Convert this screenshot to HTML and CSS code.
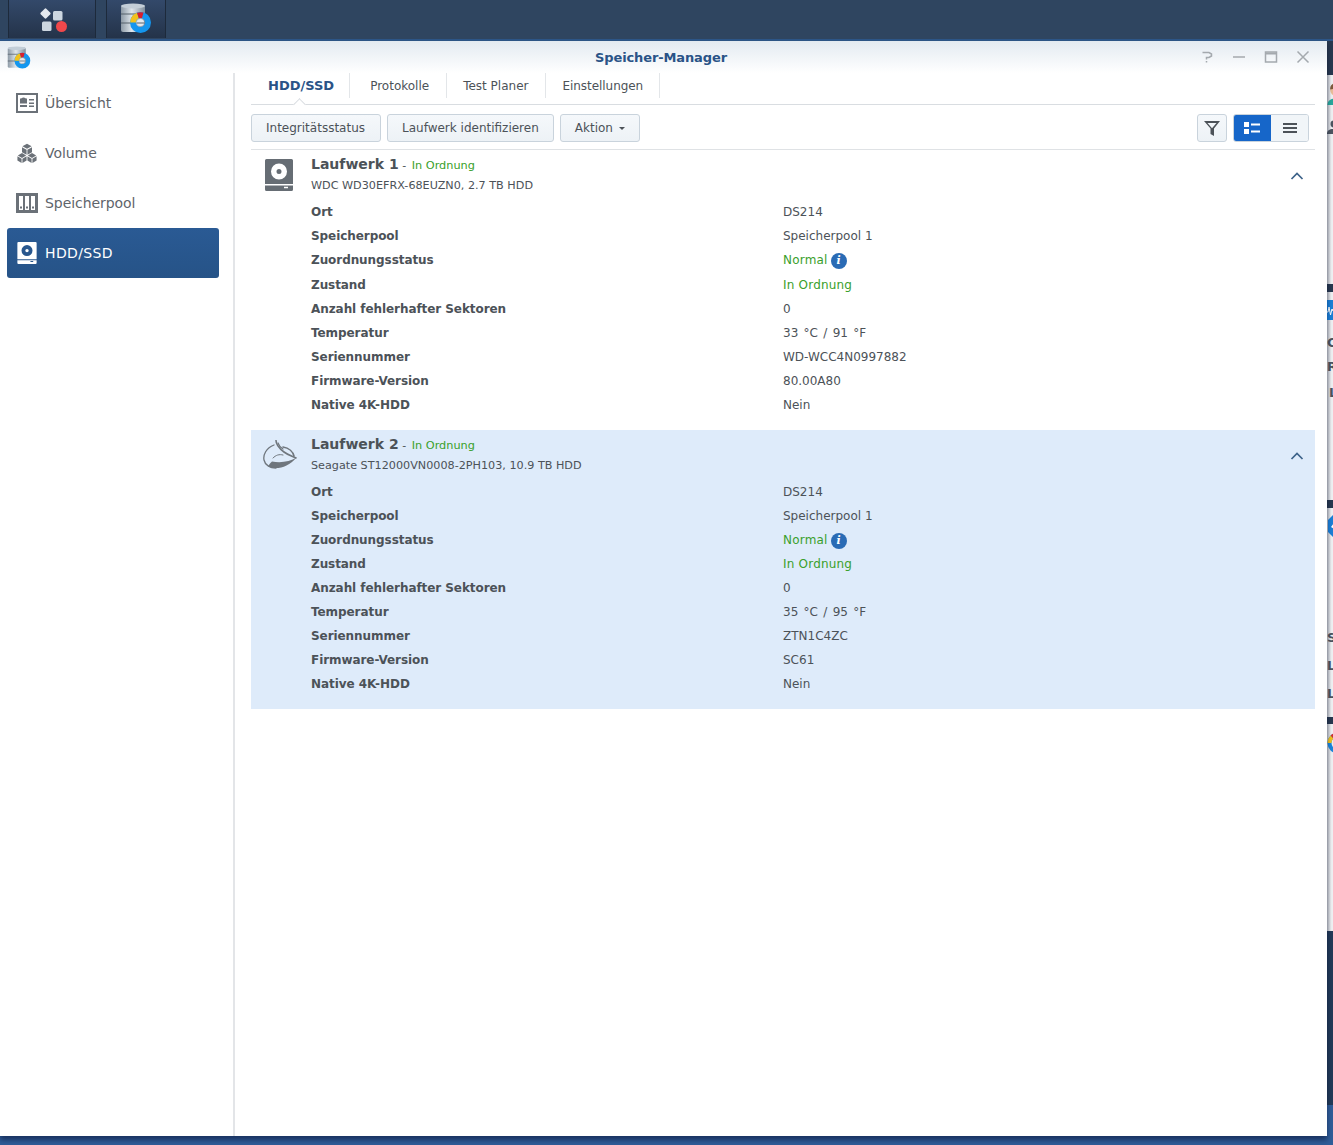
FILE: index.html
```html
<!DOCTYPE html>
<html lang="de">
<head>
<meta charset="utf-8">
<title>Speicher-Manager</title>
<link rel="stylesheet" href="styles.css">
</head>
<body>
<svg class="defs" width="0" height="0" aria-hidden="true">
  <defs>
    <linearGradient id="cyl" x1="0" x2="1" y1="0" y2="0">
      <stop offset="0" stop-color="#8d9aa6"/><stop offset=".45" stop-color="#dfe6ec"/><stop offset="1" stop-color="#7f8d9b"/>
    </linearGradient>
    <symbol id="appicon" viewBox="0 0 32 32">
      <rect x="1" y="2" width="24" height="27" rx="2" fill="url(#cyl)"/>
      <ellipse cx="13" cy="3" rx="12" ry="2.400" fill="#c3ced8"/>
      <path d="M1 11h16M1 20h10" stroke="#55606b" stroke-width="1"/>
      <circle cx="20.500" cy="19.500" r="7.500" fill="none" stroke="#1496ee" stroke-width="6"/>
      <path d="M10.200 19.500A10.300 10.300 0 0 1 17 9.800l1.800 5.500a4.500 4.500 0 0 0-2.800 4.200z" fill="#f1c21e"/>
      <path d="M17 9.800a10.300 10.300 0 0 1 6.500-.2l-1.500 5.500a4.500 4.500 0 0 0-3.200.2z" fill="#d8202c"/>
      <circle cx="20.500" cy="19.500" r="3.600" fill="#e4e9ee"/>
      <path d="M16.500 20h8" stroke="#55606b" stroke-width="1"/>
    </symbol>
    <symbol id="disk" viewBox="0 0 28 32">
      <path fill-rule="evenodd" d="M1.500 0h25A1.500 1.500 0 0 1 28 1.500v29a1.500 1.500 0 0 1-1.500 1.500h-25A1.500 1.500 0 0 1 0 30.500v-29A1.500 1.500 0 0 1 1.500 0zM14 4.500a8 8 0 1 0 0 16 8 8 0 0 0 0-16zm0 5.500a2.500 2.500 0 1 1 0 5 2.500 2.500 0 0 1 0-5zM0 25v1.500h28V25zM19 27.800v1.400h4v-1.400z"/>
    </symbol>
  </defs>
</svg>

<header class="taskbar">
  <div class="task task-main">
    <svg class="task-grid" viewBox="0 0 28 24" aria-hidden="true">
      <rect x="1.500" y="1.500" width="8" height="8" rx="1.500" fill="#e3e8ee" transform="rotate(45 5.500 5.500)"/>
      <rect x="13" y="3" width="9.500" height="9.500" rx="1.500" fill="#ccd6e0"/>
      <rect x="2" y="13.500" width="9.500" height="9.500" rx="1.500" fill="#ccd6e0"/>
      <circle cx="21.500" cy="18.500" r="5.500" fill="#f0484b"/>
    </svg>
  </div>
  <div class="task task-app">
    <svg class="task-icon"><use href="#appicon"/></svg>
  </div>
</header>

<aside class="widgets" aria-hidden="true">
  <span class="pin bar" style="top:0;height:34px"></span>
  <svg class="pin avatar" viewBox="0 0 12 24"><circle cx="9" cy="8" r="6" fill="#e9bd97"/><path d="M3 7a6 6 0 0 1 12-2z" fill="#7d5a3c"/><path d="M0 24c0-5 4-7 9-7s6 2 6 7z" fill="#27a79c"/></svg>
  <svg class="pin person" viewBox="0 0 8 14"><circle cx="7" cy="4" r="3.500" fill="#4c5560"/><path d="M0 14c0-4 3-5 7-5s4 1 4 5z" fill="#4c5560"/></svg>
  <span class="pin bar" style="top:243px;height:8px"></span>
  <svg class="pin pulse" viewBox="0 0 6 20"><rect width="6" height="20" fill="#1b7fd6"/><path d="M0 12h1l1-5 1.500 8L5 9l1 2" fill="none" stroke="#fff"/></svg>
  <span class="pin letter" style="top:294px">C</span>
  <span class="pin letter" style="top:318px">R</span>
  <span class="pin letter" style="top:344px;left:2px">L</span>
  <span class="pin bar" style="top:459px;height:8px"></span>
  <svg class="pin shield" viewBox="0 0 6 22"><path d="M0 5L5 0h3v22H5l-5-5z" fill="#1b7fd6"/><path d="M3 12l3-4v6z" fill="#fff"/></svg>
  <span class="pin letter" style="top:589px">S</span>
  <span class="pin letter" style="top:617px">L</span>
  <span class="pin letter" style="top:645px">L</span>
  <span class="pin bar" style="top:676px;height:7px"></span>
  <svg class="pin ring" viewBox="0 0 22 22"><circle cx="11" cy="11" r="8.500" fill="none" stroke="#1b86dc" stroke-width="4"/><path d="M2.500 11A8.500 8.500 0 0 1 5 5" fill="none" stroke="#f1c21e" stroke-width="4"/><path d="M5 5a8.500 8.500 0 0 1 6-2.500" fill="none" stroke="#d8302c" stroke-width="4"/></svg>
  <span class="pin lower"></span>
</aside>

<section class="window">
  <div class="titlebar">
    <svg class="title-icon"><use href="#appicon"/></svg>
    <h1 class="title">Speicher-Manager</h1>
    <div class="title-actions">
      <svg viewBox="0 0 14 14" aria-hidden="true"><path d="M2.500 2.500h6.500l2.500 1.500v2L9 7.500H6.500v2M6.500 11v1.500" fill="none" stroke="#a4a9ae" stroke-width="1.500"/></svg>
      <svg viewBox="0 0 14 14" aria-hidden="true"><path d="M1 7h12" stroke="#a4a9ae" stroke-width="1.500"/></svg>
      <svg viewBox="0 0 14 14" aria-hidden="true"><path d="M1.500 2h11v10h-11z" fill="none" stroke="#a4a9ae" stroke-width="1.500"/><path d="M1.500 3.500h11" stroke="#a4a9ae" stroke-width="2"/></svg>
      <svg viewBox="0 0 14 14" aria-hidden="true"><path d="M1.500 1.500l11 11M12.500 1.500l-11 11" stroke="#a4a9ae" stroke-width="1.500"/></svg>
    </div>
  </div>

  <div class="body">
    <nav class="sidebar">
      <a class="nav-item">
        <svg class="nav-icon" viewBox="0 0 22 20" aria-hidden="true"><path fill-rule="evenodd" d="M0 0h22v20H0zM2 2v16h18V2zM4 5.500h7v5H4zM4 12h7v2H4zM13 6h5v1.600h-5zM13 9.500h5v1.600h-5zM13 12.500h5v1.600h-5z" fill="#6b7178"/><circle cx="7.500" cy="7" r="2.500" fill="#6b7178"/></svg>
        <span>Übersicht</span>
      </a>
      <a class="nav-item">
        <svg class="nav-icon" viewBox="0 0 24 24" aria-hidden="true"><g fill="#6b7178"><path d="M12 1l5.500 3-5.500 3-5.500-3z"/><path d="M6 5l5.500 3v6L6 11z"/><path d="M18 5l-5.500 3v6L18 11z"/><path d="M6 12l5 3-5 3-5-3z"/><path d="M18 12l5 3-5 3-5-3z"/><path d="M.5 16l5 3v5l-5-3z"/><path d="M6.500 19l5-3v5l-5 3z"/><path d="M12.500 16l5 3v5l-5-3z"/><path d="M18.500 19l5-3v5l-5 3z"/></g></svg>
        <span>Volume</span>
      </a>
      <a class="nav-item">
        <svg class="nav-icon" viewBox="0 0 22 20" aria-hidden="true"><path fill-rule="evenodd" d="M0 0h22v20H0zM3 3v14h4V3zM9 3v14h4V3zM15 3v14h4V3z" fill="#6b7178"/><path d="M4 13.500h2v2H4zM10 13.500h2v2h-2zM16 13.500h2v2h-2z" fill="#6b7178"/></svg>
        <span>Speicherpool</span>
      </a>
      <a class="nav-item active">
        <svg class="nav-icon disk-white"><use href="#disk"/></svg>
        <span>HDD/SSD</span>
      </a>
    </nav>

    <main class="content">
      <div class="tabs">
        <a class="tab current">HDD/SSD</a>
        <a class="tab">Protokolle</a>
        <a class="tab">Test Planer</a>
        <a class="tab">Einstellungen</a>
      </div>

      <div class="toolbar">
        <button class="btn">Integritätsstatus</button>
        <button class="btn">Laufwerk identifizieren</button>
        <button class="btn">Aktion<i class="caret"></i></button>
        <span class="spacer"></span>
        <button class="btn btn-icon" aria-label="Filter">
          <svg viewBox="0 0 16 16" width="16" height="16" aria-hidden="true"><path fill-rule="evenodd" d="M0 1h16L10 8.500V16L6.500 14V8.500zM3.500 3L8 8.200 12.500 3z" fill="#4c5258"/></svg>
        </button>
        <div class="toggle">
          <span class="toggle-on">
            <svg viewBox="0 0 16 12" width="16" height="12" aria-hidden="true"><path d="M0 0h5v5H0zM0 7h5v5H0zM7 1.500h9v2H7zM7 8.500h9v2H7z" fill="#fff"/></svg>
          </span>
          <span class="toggle-off">
            <svg viewBox="0 0 14 10" width="14" height="10" aria-hidden="true"><path d="M0 0h14v2H0zM0 4h14v2H0zM0 8h14v2H0z" fill="#4c5258"/></svg>
          </span>
        </div>
      </div>

      <article class="drive">
        <header class="drive-head">
          <svg class="drive-icon"><use href="#disk"/></svg>
          <div class="drive-title">
            <div class="drive-name"><strong>Laufwerk 1</strong> - <em>In Ordnung</em></div>
            <div class="drive-model">WDC WD30EFRX-68EUZN0, 2.7 TB HDD</div>
          </div>
          <svg class="chevron" viewBox="0 0 14 8" aria-hidden="true"><path d="M1.500 7L7 1.500 12.500 7" fill="none" stroke="#3d6289" stroke-width="1.700"/></svg>
        </header>
        <dl class="props props-first">
          <dt>Ort</dt><dd>DS214</dd>
          <dt>Speicherpool</dt><dd>Speicherpool 1</dd>
          <dt>Zuordnungsstatus</dt><dd class="ok">Normal <i class="info">i</i></dd>
          <dt>Zustand</dt><dd class="ok">In Ordnung</dd>
          <dt>Anzahl fehlerhafter Sektoren</dt><dd>0</dd>
          <dt>Temperatur</dt><dd class="temp">33 °C / 91 °F</dd>
          <dt>Seriennummer</dt><dd>WD-WCC4N0997882</dd>
          <dt>Firmware-Version</dt><dd>80.00A80</dd>
          <dt>Native 4K-HDD</dt><dd>Nein</dd>
        </dl>
      </article>

      <article class="drive selected">
        <header class="drive-head">
          <svg class="drive-icon seagate" viewBox="0 0 34 30" aria-hidden="true">
            <path d="M5 26.500C13 30 25 28 33.500 17.500 27 22 17 23 9 21.500 7 23 6 25 5 26.500z" fill="#6f767d"/>
            <g fill="none" stroke="#6f767d" stroke-linecap="round">
              <path d="M11 5C3 8 0 15 1 20c1 5 6 8 12 8" stroke-width="1.300"/>
              <path d="M13 .5C13 5 17 9 21 12c4 3 8 4 12 6" stroke-width="1.600"/>
              <path d="M15 3c1 3 3 5 5 6" stroke-width="1.300"/>
              <path d="M20 7c6 1 10 5 11 9" stroke-width="1.600"/>
              <path d="M10 18c3-3 6-4 10-3" stroke-width="1"/>
            </g>
          </svg>
          <div class="drive-title">
            <div class="drive-name"><strong>Laufwerk 2</strong> - <em>In Ordnung</em></div>
            <div class="drive-model">Seagate ST12000VN0008-2PH103, 10.9 TB HDD</div>
          </div>
          <svg class="chevron" viewBox="0 0 14 8" aria-hidden="true"><path d="M1.500 7L7 1.500 12.500 7" fill="none" stroke="#3d6289" stroke-width="1.700"/></svg>
        </header>
        <dl class="props">
          <dt>Ort</dt><dd>DS214</dd>
          <dt>Speicherpool</dt><dd>Speicherpool 1</dd>
          <dt>Zuordnungsstatus</dt><dd class="ok">Normal <i class="info">i</i></dd>
          <dt>Zustand</dt><dd class="ok">In Ordnung</dd>
          <dt>Anzahl fehlerhafter Sektoren</dt><dd>0</dd>
          <dt>Temperatur</dt><dd class="temp">35 °C / 95 °F</dd>
          <dt>Seriennummer</dt><dd>ZTN1C4ZC</dd>
          <dt>Firmware-Version</dt><dd>SC61</dd>
          <dt>Native 4K-HDD</dt><dd>Nein</dd>
        </dl>
      </article>
    </main>
  </div>
</section>
</body>
</html>
```
FILE: styles.css
```css
* { box-sizing: border-box; }
html, body { height: 100%; }
body {
  margin: 0;
  height: 1145px;
  overflow: hidden;
  position: relative;
  background: #2f5c98;
  font-family: "DejaVu Sans", Verdana, sans-serif;
  font-size: 12px;
  color: #4c5258;
}
.defs { position: absolute; }

.taskbar {
  height: 41px;
  display: flex;
  padding-left: 8px;
  gap: 10px;
  background: #2f4560;
  border-bottom: 2px solid #2d5688;
}
.task {
  height: 38px;
  display: flex;
  align-items: center;
  justify-content: center;
  background: linear-gradient(#33496a, #243349);
  border-left: 1px solid #1d2a3b;
  border-right: 1px solid #1d2a3b;
}
.task-main { width: 88px; }
.task-app { width: 60px; }
.task-grid { width: 28px; height: 24px; margin: 1px 0 0 4px; }
.task-icon { width: 32px; height: 32px; }

.widgets {
  position: absolute;
  left: 1327px;
  top: 41px;
  width: 6px;
  height: 1064px;
  overflow: hidden;
  background: linear-gradient(90deg, #bcc1c7, #eef0f2 70%);
}
.pin { position: absolute; left: 0; }
.bar { width: 6px; background: #27384f; }
.letter { font: bold 13px/16px "DejaVu Sans", sans-serif; color: #4c5560; }
.avatar { top: 42px; width: 12px; height: 22px; }
.person { top: 79px; width: 8px; height: 14px; }
.pulse { top: 259px; width: 6px; height: 20px; }
.shield { top: 474px; width: 8px; height: 22px; }
.ring { top: 691px; width: 22px; height: 22px; }
.lower {
  top: 890px;
  width: 6px;
  height: 174px;
  background: #223a58;
}

.window {
  position: absolute;
  left: 0;
  top: 41px;
  width: 1327px;
  height: 1095px;
  display: flex;
  flex-direction: column;
  background: #fff;
  box-shadow: 0 4px 5px rgba(0, 0, 30, .45);
}
.titlebar {
  height: 32px;
  flex: none;
  display: flex;
  align-items: center;
  justify-content: center;
  position: relative;
  padding: 1px 5px 0 0;
  background: linear-gradient(#e3eaf1, #fff);
}
.title-icon {
  position: absolute;
  left: 7px;
  top: 5px;
  width: 24px;
  height: 24px;
}
.title {
  margin: 0;
  font-size: 13px;
  font-weight: bold;
  letter-spacing: -.12px;
  line-height: 31px;
  color: #2a5387;
}
.title-actions {
  position: absolute;
  right: 17px;
  top: 9px;
  display: flex;
  gap: 18px;
}
.title-actions svg { width: 14px; height: 14px; display: block; }

.body { flex: 1; display: flex; min-height: 0; }

.sidebar {
  width: 235px;
  flex: none;
  border-right: 2px solid #e3e5e8;
  padding: 5px 14px 0 7px;
  display: flex;
  flex-direction: column;
}
.nav-item {
  height: 50px;
  display: flex;
  align-items: center;
  gap: 7px;
  padding-left: 9px;
  border-radius: 3px;
  font-size: 14px;
  letter-spacing: -.06px;
  color: #5f656b;
}
.nav-item.active {
  background: linear-gradient(#2a5a94, #265387);
  color: #fff;
  letter-spacing: .35px;
}
.nav-icon { width: 22px; height: 20px; flex: none; }
.disk-white { fill: #fff; width: 20px; height: 22px; margin: 0 1px; }

.content {
  flex: 1;
  min-width: 0;
  padding: 0 12px 0 16px;
}
.tabs {
  height: 32px;
  display: flex;
  align-items: flex-start;
  border-bottom: 1px solid #d9dde1;
}
.tab {
  height: 25px;
  padding: 0 16px;
  display: flex;
  align-items: center;
  border-right: 1px solid #e3e6e9;
  position: relative;
}
.tab.current {
  padding: 0 15px 0 17px;
  color: #2a5387;
  font-size: 13px;
  font-weight: bold;
}
.tab:nth-child(2) { padding: 0 17px 0 20px; }
.tab:nth-child(3) { padding-right: 17px; }
.tab:nth-child(4) { letter-spacing: -.05px; }
.tab.current::after {
  content: "";
  position: absolute;
  left: 44px;
  bottom: -11px;
  width: 8px;
  height: 8px;
  background: #fff;
  border-left: 1px solid #d9dde1;
  border-top: 1px solid #d9dde1;
  transform: rotate(45deg);
}
.toolbar {
  height: 45px;
  display: flex;
  align-items: center;
  gap: 6px;
  padding: 1px 6px 0 0;
  border-bottom: 1px solid #dfe2e5;
}
.btn {
  height: 28px;
  padding: 0 14px;
  border: 1px solid #c9d3dc;
  border-radius: 3px;
  background: linear-gradient(#f5f8fb, #edf2f6);
  font: inherit;
  color: #4c5258;
}
.btn:first-child { padding-right: 15px; }
.caret {
  display: inline-block;
  margin-left: 6px;
  vertical-align: 2px;
  border-left: 3px solid transparent;
  border-right: 3px solid transparent;
  border-top: 3px solid #4c5258;
}
.spacer { flex: 1; }
.btn-icon {
  width: 30px;
  padding: 0;
  display: flex;
  align-items: center;
  justify-content: center;
}
.toggle {
  width: 76px;
  height: 28px;
  display: flex;
  border-radius: 3px;
  overflow: hidden;
  border: 1px solid #c9d3dc;
}
.toggle-on, .toggle-off {
  display: flex;
  align-items: center;
  justify-content: center;
}
.toggle-on { width: 38px; margin: -1px 0 -1px -1px; background: #1666c9; }
.toggle-off { flex: 1; background: #f1f5f8; }

.drive {
  height: 280px;
  padding: 6px 0 0;
}
.drive.selected { background: #deebfa; height: 279px; }
.drive-head {
  display: flex;
  position: relative;
  height: 44px;
  padding-left: 14px;
}
.drive-icon {
  width: 28px;
  height: 32px;
  margin-top: 3px;
  flex: none;
  fill: #666d74;
}
.drive-icon.seagate { width: 34px; height: 30px; margin: 4px -4px 0 -2px; }
.drive-title { margin-left: 18px; }
.drive-name {
  font-size: 11px;
  line-height: 17px;
}
.drive-name strong { font-size: 14px; }
.drive-name em { font-size: 11.300px; font-style: normal; color: #3aa02b; margin-left: 2px; }
.drive-model { font-size: 11.200px; line-height: 24px; }
.chevron {
  position: absolute;
  right: 11px;
  top: 16px;
  width: 14px;
  height: 8px;
}
.props {
  margin: 0;
  padding-left: 60px;
  display: grid;
  grid-template-columns: 472px 1fr;
  grid-auto-rows: 24px;
  align-items: start;
  line-height: 24px;
}
.props-first { grid-template-rows: 24px 24px 25px; }
.props dt { font-weight: bold; letter-spacing: -.07px; }
.props dd { margin: 0; display: flex; align-items: center; gap: 3px; height: 24px; }
.props dd.ok { color: #3aa02b; letter-spacing: .2px; }
.props dd.temp { word-spacing: 1.500px; }
.info {
  width: 16px;
  height: 16px;
  margin-top: 2px;
  border-radius: 50%;
  background: #2a6bb5;
  color: #fff;
  font: italic bold 11px/16px "DejaVu Serif", serif;
  letter-spacing: 0;
  text-align: center;
}
```
